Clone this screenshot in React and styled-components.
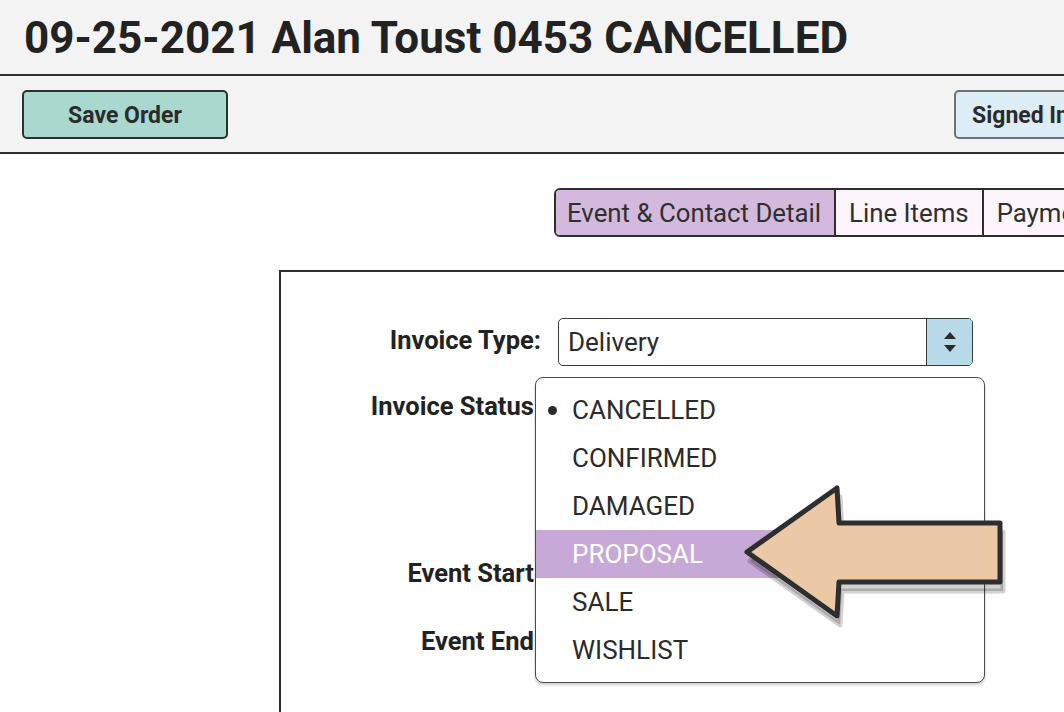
import styled, { createGlobalStyle } from "styled-components";

const statuses = ["CANCELLED", "CONFIRMED", "DAMAGED", "PROPOSAL", "SALE", "WISHLIST"];
const current = "CANCELLED";
const hovered = "PROPOSAL";

const tabs = ["Event & Contact Detail", "Line Items", "Payments"];

export default function App() {
  return (
    <>
      <GlobalStyle />
      <Page>
        <Header>
          <Title>09-25-2021 Alan Toust 0453 CANCELLED</Title>
        </Header>
        <Toolbar>
          <ActionButton $bg="#a8d8ce" $border="#2f2f2f">Save Order</ActionButton>
          <ActionButton $bg="#dcedf6" $border="#6f7275" $push>Signed In</ActionButton>
        </Toolbar>

        <TabRow>
          <Tabs>
            {tabs.map((t, i) => (
              <Tab key={t} $active={i === 0}>{t}</Tab>
            ))}
          </Tabs>
        </TabRow>

        <Panel>
          <Form>
            <Label>Invoice Type:</Label>
            <Select>
              <SelectValue>Delivery</SelectValue>
              <Stepper>
                <svg width="14" height="26" viewBox="0 0 14 26">
                  <path d="M7 3 L13 10 L1 10 Z" fill="#2b2b2b" />
                  <path d="M1 16 L13 16 L7 23 Z" fill="#2b2b2b" />
                </svg>
              </Stepper>
            </Select>

            <Label $top={18}>Invoice Status:</Label>
            <FieldCell $top={18}>
              <Select>
                <SelectValue>CANCELLED</SelectValue>
              </Select>
              <Menu>
                {statuses.map((s) => (
                  <MenuItem key={s} $hover={s === hovered}>
                    {s === current && <Bullet />}
                    {s}
                  </MenuItem>
                ))}
              </Menu>
            </FieldCell>

            <Label $top={119}>Event Start:</Label>
            <FieldCell $top={119}>
              <Select>
                <SelectValue>09-25-2021</SelectValue>
              </Select>
            </FieldCell>

            <Label $top={20}>Event End:</Label>
            <FieldCell $top={20}>
              <Select>
                <SelectValue>09-26-2021</SelectValue>
              </Select>
            </FieldCell>
          </Form>
        </Panel>

        <Pointer width="280" height="160" viewBox="0 0 280 160">
          <path
            d="M12 74 L102 10 L104 45 L265 45 L265 104 L104 104 L102 138 Z"
            transform="translate(3 9)"
            fill="rgba(0,0,0,0.18)"
            stroke="rgba(0,0,0,0.18)"
            strokeWidth="5"
            strokeLinejoin="round"
          />
          <path
            d="M12 74 L102 10 L104 45 L265 45 L265 104 L104 104 L102 138 Z"
            fill="#ecc9a6"
            stroke="#2e2e2e"
            strokeWidth="5"
            strokeLinejoin="round"
          />
        </Pointer>
      </Page>
    </>
  );
}

//Styles
const GlobalStyle = createGlobalStyle`
  body {
    margin: 0;
    background: #ffffff;
    font-family: Roboto, "Liberation Sans", sans-serif;
    color: #252525;
    overflow: hidden;
  }
`;

const Page = styled.div`
  position: relative;
  width: 1064px;
  height: 712px;
  overflow: hidden;
`;

const Header = styled.header`
  width: 1180px;
  height: 74px;
  background: #f3f3f3;
  border-bottom: 2px solid #2e2e2e;
  padding-left: 24px;
`;

const Title = styled.h1`
  margin: 0;
  padding-top: 11px;
  font-size: 44px;
  line-height: 54px;
  font-weight: 700;
  color: #222;
  white-space: nowrap;
`;

const Toolbar = styled.div`
  display: flex;
  align-items: center;
  width: 1138px;
  height: 76px;
  padding: 0 20px 0 22px;
  background: #f3f3f3;
  border-bottom: 2px solid #2e2e2e;
`;

const ActionButton = styled.button`
  width: 206px;
  height: 49px;
  flex-shrink: 0;
  margin-left: ${(p) => (p.$push ? "auto" : "0")};
  background: ${(p) => p.$bg};
  border: 2px solid ${(p) => p.$border};
  border-radius: 5px;
  font-family: Roboto, "Liberation Sans", sans-serif;
  font-size: 23px;
  font-weight: 700;
  color: #2b2b2b;
  text-align: ${(p) => (p.$push ? "left" : "center")};
  padding: ${(p) => (p.$push ? "2px 0 0 16px" : "2px 0 0 0")};
  white-space: nowrap;
`;

const TabRow = styled.div`
  display: flex;
  padding-left: 554px;
  margin-top: 34px;
`;

const Tabs = styled.div`
  display: flex;
  flex-shrink: 0;
  border: 2px solid #2e2e2e;
  border-radius: 6px;
  overflow: hidden;
`;

const Tab = styled.div`
  height: 45px;
  display: flex;
  align-items: center;
  padding: 0 13px 0 11px;
  font-size: 25.8px;
  color: #2f2f2f;
  white-space: nowrap;
  background: ${(p) => (p.$active ? "#d3b9dc" : "#fcf5fc")};
  & + & {
    border-left: 2px solid #2e2e2e;
    padding-left: 13px;
  }
`;

const Panel = styled.section`
  margin: 33px 0 0 279px;
  width: 900px;
  height: 520px;
  border: 2px solid #2e2e2e;
  padding-top: 46px;
  box-sizing: border-box;
`;

const Form = styled.div`
  display: grid;
  grid-template-columns: 260px 415px;
  column-gap: 17px;
  align-items: center;
`;

const Label = styled.div`
  margin-top: ${(p) => p.$top || 0}px;
  padding-bottom: 4px;
  text-align: right;
  font-size: 25.5px;
  font-weight: 700;
  color: #222;
  white-space: nowrap;
`;

const FieldCell = styled.div`
  position: relative;
  margin-top: ${(p) => p.$top || 0}px;
`;

const Select = styled.div`
  display: flex;
  height: 48px;
  box-sizing: border-box;
  border: 1.5px solid #3a3a3a;
  border-radius: 5px;
  background: #fff;
  overflow: hidden;
`;

const SelectValue = styled.div`
  flex: 1;
  display: flex;
  align-items: center;
  padding-left: 9px;
  font-size: 26px;
  color: #2b2b2b;
`;

const Stepper = styled.div`
  width: 45px;
  display: flex;
  align-items: center;
  justify-content: center;
  background: #b8d9e8;
  border-left: 1.5px solid #3a3a3a;
`;

const Menu = styled.div`
  position: absolute;
  z-index: 5;
  left: -23px;
  top: -7px;
  width: 450px;
  box-sizing: border-box;
  padding: 8px 0;
  background: #fff;
  border: 1.5px solid #4a4a4a;
  border-radius: 8px;
  box-shadow: 0 2px 3px rgba(0, 0, 0, 0.2);
`;

const MenuItem = styled.div`
  position: relative;
  height: 48px;
  display: flex;
  align-items: center;
  padding-left: 36px;
  font-size: 26px;
  color: ${(p) => (p.$hover ? "#ffffff" : "#2b2b2b")};
  background: ${(p) => (p.$hover ? "#c6a9d6" : "transparent")};
`;

const Bullet = styled.span`
  position: absolute;
  left: 12px;
  top: 20px;
  width: 9px;
  height: 9px;
  border-radius: 50%;
  background: #2b2b2b;
`;

const Pointer = styled.svg`
  position: absolute;
  z-index: 10;
  left: 735px;
  top: 478px;
`;
